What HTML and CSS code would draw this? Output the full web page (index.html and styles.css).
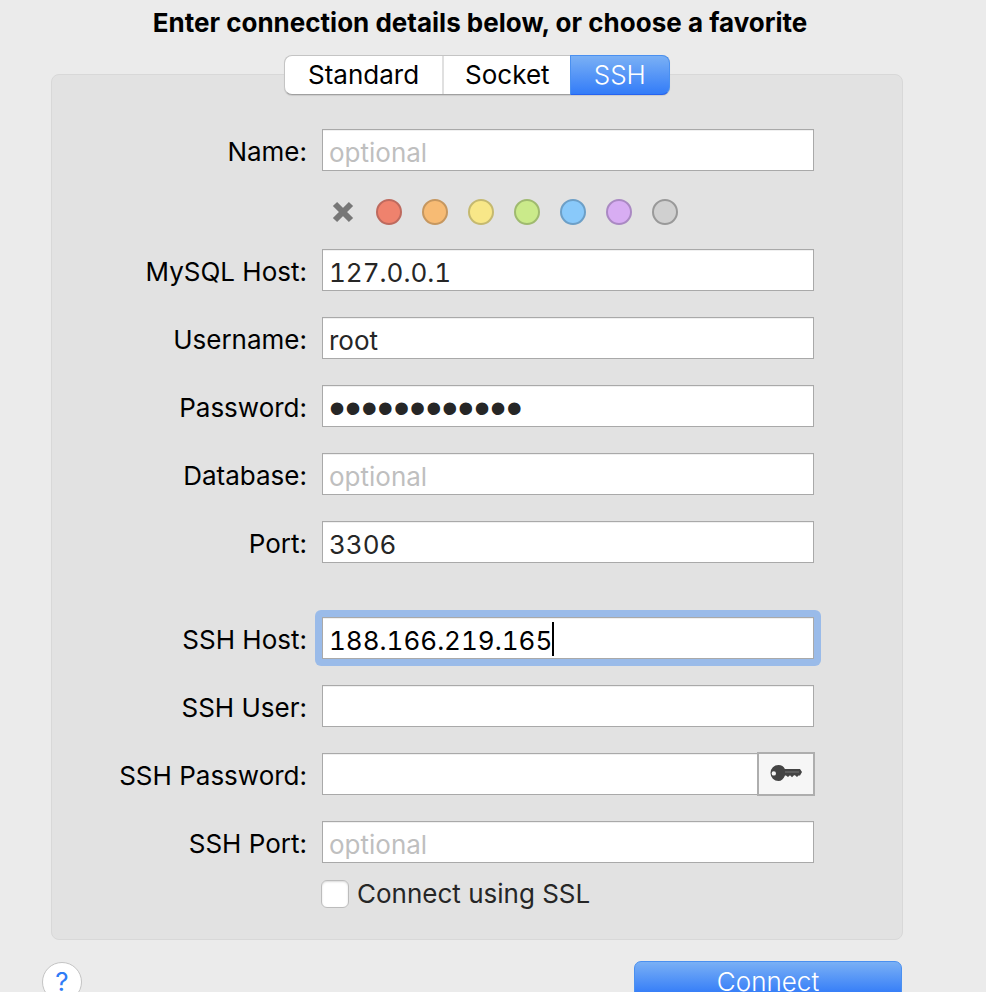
FILE: index.html
```html
<!DOCTYPE html>
<html lang="en">
<head>
<meta charset="utf-8">
<meta name="viewport" content="width=device-width, initial-scale=1">
<title>Connection</title>
<link rel="stylesheet" href="styles.css">
</head>
<body>
<main class="window">
  <h1 class="title">Enter connection details below, or choose a favorite</h1>
  <form class="connection">
    <div class="tabs" role="tablist">
      <button type="button" class="tab" role="tab" aria-selected="false">Standard</button>
      <button type="button" class="tab" role="tab" aria-selected="false">Socket</button>
      <button type="button" class="tab tab-active" role="tab" aria-selected="true">SSH</button>
    </div>
    <div class="panel">
      <div class="row">
        <label class="label" for="name">Name:</label>
        <input class="field" id="name" type="text" placeholder="optional">
      </div>
      <div class="colors">
        <button type="button" class="color" aria-label="No color">
          <svg viewBox="0 0 26 26"><path d="M5 5 21 21M21 5 5 21" fill="none" stroke="#777" stroke-width="6"/></svg>
        </button>
        <button type="button" class="color color-red" aria-label="Red"></button>
        <button type="button" class="color color-orange" aria-label="Orange"></button>
        <button type="button" class="color color-yellow" aria-label="Yellow"></button>
        <button type="button" class="color color-green" aria-label="Green"></button>
        <button type="button" class="color color-blue" aria-label="Blue"></button>
        <button type="button" class="color color-purple" aria-label="Purple"></button>
        <button type="button" class="color color-gray" aria-label="Gray"></button>
      </div>
      <div class="group">
        <div class="row">
          <label class="label" for="host">MySQL Host:</label>
          <input class="field" id="host" type="text" value="127.0.0.1">
        </div>
        <div class="row">
          <label class="label" for="user">Username:</label>
          <input class="field" id="user" type="text" value="root">
        </div>
        <div class="row">
          <label class="label" for="password">Password:</label>
          <input class="field field-secret" id="password" type="password" value="abcdefghijkl">
        </div>
        <div class="row">
          <label class="label" for="database">Database:</label>
          <input class="field" id="database" type="text" placeholder="optional">
        </div>
        <div class="row">
          <label class="label" for="port">Port:</label>
          <input class="field" id="port" type="text" value="3306">
        </div>
      </div>
      <div class="group group-ssh">
        <div class="row">
          <label class="label" for="ssh-host">SSH Host:</label>
          <div class="control control-focused">
            <input class="field field-focused" id="ssh-host" type="text" value="188.166.219.165">
            <span class="caret"></span>
          </div>
        </div>
        <div class="row">
          <label class="label" for="ssh-user">SSH User:</label>
          <input class="field" id="ssh-user" type="text">
        </div>
        <div class="row">
          <label class="label" for="ssh-password">SSH Password:</label>
          <div class="control">
            <input class="field" id="ssh-password" type="password">
            <button type="button" class="key" aria-label="Choose key file">
              <svg class="key-icon" viewBox="0 0 34 20"><path fill="#444" fill-rule="evenodd" d="M9.500 1c3 0 5.200 1.600 6.400 4H31l2 3-2 3.500h-1.500L28 13l-2-1.700h-1L23 13.200l-2-1.900L19 13l-2-1.500h-1C14.600 15 12.400 17 9.500 17a8 8 0 0 1 0-16zM4.800 7.200a2.200 2.200 0 1 0 0 4.400 2.200 2.200 0 0 0 0-4.400z"/><path d="M16 8h14" stroke="#777" stroke-width="1"/></svg>
            </button>
          </div>
        </div>
        <div class="row">
          <label class="label" for="ssh-port">SSH Port:</label>
          <input class="field" id="ssh-port" type="text" placeholder="optional">
        </div>
      </div>
      <div class="ssl">
        <input class="checkbox" id="ssl" type="checkbox">
        <label class="ssl-label" for="ssl">Connect using SSL</label>
      </div>
    </div>
    <div class="actions">
      <button type="button" class="help" aria-label="Help">?</button>
      <button type="submit" class="connect">Connect</button>
    </div>
  </form>
</main>
</body>
</html>
```
FILE: styles.css
```css
* {
  box-sizing: border-box;
}

body {
  height: 100vh;
  margin: 0;
  overflow: hidden;
  background: #ebebeb;
  color: #000;
  font: 26px/32px Inter, "Liberation Sans", sans-serif;
}

button,
input {
  margin: 0;
  padding: 0;
  border: 0;
  color: inherit;
  font: inherit;
}

.window {
  padding: 7px 83px 0 51px;
}

.title {
  margin: 0 0 16px 6px;
  font-size: 26px;
  font-weight: 700;
  line-height: 32px;
  text-align: center;
  white-space: nowrap;
}

.tabs {
  position: relative;
  display: flex;
  width: 386px;
  height: 40px;
  margin: 0 auto -21px;
  border: 1px solid #c4c4c4;
  border-bottom-color: #a0a0a0;
  border-radius: 8px;
  background: #fff;
  box-shadow: 0 1px 1px #0000001a;
}

.tab {
  flex: 158 1 0;
  border-right: 2px solid #e0e0e0;
  background: none;
}

.tab + .tab {
  flex-grow: 127;
  border-right: 0;
}

.tab + .tab-active {
  flex-grow: 99;
  margin: -1px;
  border: 1px solid #4a90f0;
  border-bottom-color: #2663f0;
  border-radius: 0 8px 8px 0;
  background: linear-gradient(#7ab0f5, #337cf8);
  color: #fff;
  font-weight: 300;
}

.panel {
  padding: 54px 88px 29px;
  padding-left: 0;
  border: 1px solid #d8d8d8;
  border-radius: 8px;
  background: #e2e2e2;
}

.row {
  display: grid;
  grid-template-columns: 255px minmax(0, 1fr);
  column-gap: 15px;
}

.label {
  padding-top: 7px;
  text-align: right;
  white-space: nowrap;
}

.field {
  width: 100%;
  min-width: 0;
  height: 42px;
  padding: 4px 8px 0 6px;
  border: 1px solid #a9a9a9;
  border-radius: 0;
  outline: 0;
  background: #fff;
  box-shadow: inset 0 1px #f0f0f0;
  color: #262626;
  font-variant-numeric: tabular-nums;
}

.field::placeholder {
  color: #bfbfbf;
  opacity: 1;
}

.field-secret {
  padding-top: 3px;
  font-family: "Liberation Sans", Arial, sans-serif;
  font-size: 46px;
  line-height: 40px;
}

.control {
  position: relative;
  display: flex;
}

.control-focused {
  margin: -7px;
  padding: 7px;
  border-radius: 6px;
  background: #9abbe9;
}

.field-focused {
  color: #000;
}

.caret {
  position: absolute;
  top: 12px;
  left: 237px;
  width: 2px;
  height: 34px;
  background: #000;
}

.colors {
  display: flex;
  gap: 20px;
  margin: 28px 0 24px 278px;
}

.color {
  width: 26px;
  height: 26px;
  border: 2px solid #999;
  border-radius: 50%;
  background: #d0d0d0;
}

.color:first-child {
  border: 0;
  background: none;
}

.color svg {
  display: block;
}

.color-red { border-color: #be6a5e; background: #ef826d; }
.color-orange { border-color: #c6975f; background: #f7bb74; }
.color-yellow { border-color: #c5b96f; background: #f8e788; }
.color-green { border-color: #9fba6f; background: #caea8a; }
.color-blue { border-color: #6c9fc7; background: #89c9fa; }
.color-purple { border-color: #aa89c3; background: #d8adf3; }

.group {
  display: grid;
  gap: 26px;
}

.group-ssh {
  margin-top: 54px;
}

.key {
  flex: 0 0 58px;
  height: 44px;
  margin: -1px;
  border: 2px solid #aeaeae;
  background: #f6f6f6;
}

.key-icon {
  display: block;
  width: 34px;
  height: 20px;
  margin: 0 auto;
}

.ssl {
  display: flex;
  align-items: center;
  gap: 8px;
  margin: 15px 0 0 269px;
}

.checkbox {
  width: 28px;
  height: 28px;
  appearance: none;
  border: 1px solid #bcbcbc;
  border-radius: 6px;
  background: #fff;
  box-shadow: inset 0 1px 2px #00000026;
}

.ssl-label {
  color: #262626;
}

.actions {
  display: flex;
  justify-content: space-between;
  align-items: flex-start;
  margin: 21px 1px 0 -9px;
}

.help {
  width: 40px;
  height: 40px;
  margin-top: 1px;
  border: 1px solid #c4c4c4;
  border-radius: 50%;
  background: #fff;
  color: #2f7cf6;
}

.connect {
  width: 268px;
  height: 42px;
  border: 1px solid #4a90f0;
  border-radius: 7px;
  background: linear-gradient(#7ab0f5, #337cf8 80%);
  color: #fff;
  font-weight: 300;
}
```
